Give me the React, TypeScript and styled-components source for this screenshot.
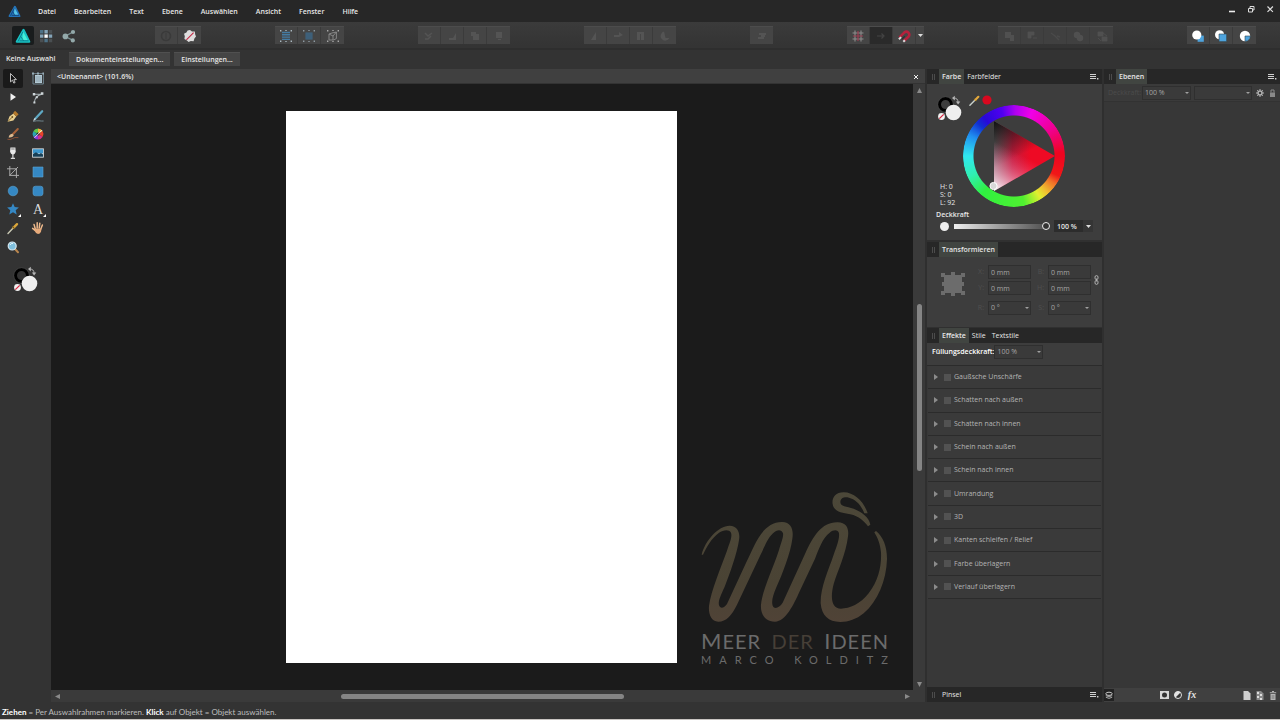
import React from 'react';
import styled, { createGlobalStyle, css } from 'styled-components';

const c = {
  menu: '#272727',
  bar: '#333333',
  panel: '#3d3d3d',
  group: '#454545',
  canvas: '#1b1b1b',
  line: '#2b2b2b',
  text: '#e6e6e6',
  dim: '#a6a6a6',
  blue: '#3588c4',
};

const Global = createGlobalStyle`
  *, *::before, *::after { box-sizing: border-box; }
  body { margin: 0; background: ${c.bar}; }
  body, button, input, select {
    font-family: 'Open Sans', 'Noto Sans', sans-serif;
    font-size: 7px;
    line-height: 10px;
    color: ${c.text};
  }
  button { border: 0; padding: 0; background: none; display: flex; align-items: center; justify-content: center; }
  svg { display: block; }
`;

const Shell = styled.div`
  min-height: 100vh;
  display: grid;
  grid-template-rows: 22px 28px 19px minmax(0, 1fr) 17px;
  border-bottom: 1px solid #c9c5c2;
`;

/* ---------- menu bar ---------- */
const MenuBar = styled.header`
  display: flex;
  align-items: center;
  background: ${c.menu};
  padding: 0 5px 0 8px;
`;
const MenuNav = styled.nav`
  display: flex;
  gap: 18px;
  margin-left: 17px;
  flex: 1;
  padding-top: 2px;
`;
const MenuItem = styled.button`
  font-weight: 600;
`;
const WindowControls = styled.div`
  display: flex;
  gap: 9px;
  align-self: flex-start;
  padding-top: 4px;
`;

/* ---------- toolbar ---------- */
const Toolbar = styled.div`
  display: flex;
  align-items: flex-start;
  gap: 74px;
  padding: 4px 0 0 12px;
  background: linear-gradient(#3b3b3b, #343434 90%);
  border-bottom: 2px solid #2e2e2e;
`;
const Personas = styled.div`
  display: flex;
  gap: 1px;
  width: 69px;
`;
const Persona = styled.button<{ $on?: boolean }>`
  width: 22px;
  height: 19px;
  border-radius: 2px;
  background: ${(p) => (p.$on ? '#191c1d' : 'transparent')};
`;
const Group = styled.div<{ $faint?: boolean }>`
  display: flex;
  height: 18px;
  background: ${(p) => (p.$faint ? '#404040' : c.group)};
  border-top: 1px solid #4c4c4c;
`;
const ToolButton = styled.button<{ $pressed?: boolean; $narrow?: boolean }>`
  width: ${(p) => (p.$narrow ? 8 : 23)}px;
  border-right: 1px solid #3b3b3b;
  background: ${(p) => (p.$pressed ? '#2a2a2a' : 'transparent')};
  &:last-child { border-right: 0; }
`;

/* ---------- context bar ---------- */
const ContextBar = styled.div`
  display: flex;
  align-items: center;
  gap: 4px;
  padding: 0 0 1px 6px;
  background: ${c.bar};
  font-weight: 600;
`;
const Selection = styled.span`
  width: 59px;
`;
const ContextButton = styled.button`
  height: 14px;
  padding: 0 7px;
  background: ${c.group};
  border-top: 1px solid #505050;
  font-weight: 600;
`;

/* ---------- main ---------- */
const Main = styled.main`
  display: grid;
  grid-template-columns: 51px minmax(0, 1fr) 175px 176px;
  column-gap: 2px;
  background: #2f2f2f;
`;
const ToolPanel = styled.aside`
  background: ${c.bar};
  margin-right: -2px;
`;
const ToolGrid = styled.div`
  display: grid;
  grid-template-columns: repeat(2, 25px);
  grid-auto-rows: 1fr;
  height: 187px;
  justify-items: center;
`;
const Tool = styled.button<{ $on?: boolean; $more?: boolean }>`
  width: 20px;
  border-radius: 2px;
  background: ${(p) => (p.$on ? '#1a1a1a' : 'transparent')};
  ${(p) =>
    p.$more &&
    css`
      position: relative;
      &::after {
        content: '';
        position: absolute;
        right: 2px;
        bottom: 2px;
        border-left: 3px solid transparent;
        border-bottom: 3px solid #fff;
      }
    `}
`;
const ToolSwatch = styled.div`
  padding: 10px 0 0 12px;
`;

const Document = styled.section`
  display: grid;
  grid-template-columns: minmax(0, 1fr) 12px;
  grid-template-rows: 15px minmax(0, 1fr) 12px;
  margin-left: -2px;
  background: #3a3a3a;
`;
const DocTab = styled.div`
  grid-column: 1 / 3;
  display: flex;
  align-items: center;
  justify-content: space-between;
  padding: 1px 6px 0;
  background: #404040;
  border-bottom: 1px solid #333;
  font-weight: 600;
`;
const Canvas = styled.div`
  position: relative;
  display: flex;
  align-items: center;
  justify-content: center;
  padding-right: 2px;
  background: ${c.canvas};
`;
const Artboard = styled.div`
  height: calc(100% - 54px);
  aspect-ratio: 391 / 552;
  background: #fff;
`;
const Watermark = styled.div`
  position: absolute;
  right: 25px;
  bottom: 24px;
  width: 187px;
`;
const Brand = styled.div`
  display: flex;
  justify-content: space-between;
  margin: 9px -1px 0 0;
  font: 20px/20px Lato, sans-serif;
  letter-spacing: 1px;
  color: #6b6b6b;
`;
const Initial = styled.span`
  font-size: 22px;
`;
const Muted = styled.span`
  color: #463f37;
`;
const Author = styled.div`
  display: flex;
  justify-content: space-between;
  margin: 3px -8px 0 0;
  font: 11px/12px Lato, sans-serif;
  letter-spacing: 8px;
  color: #6b6b6b;
`;
const VScroll = styled.div`
  display: flex;
  flex-direction: column;
  align-items: center;
  justify-content: space-between;
  padding: 4px 0 3px;
`;
const HScroll = styled.div`
  display: flex;
  align-items: center;
  justify-content: space-between;
  padding: 0 3px 0 4px;
`;
const VThumb = styled.div`
  width: 5px;
  height: 28%;
  border-radius: 3px;
  background: #858585;
`;
const HThumb = styled.div`
  height: 5px;
  width: 33%;
  border-radius: 3px;
  background: #858585;
`;

/* ---------- panels ---------- */
const Column = styled.aside`
  display: flex;
  flex-direction: column;
  background: #383838;
`;
const TabBar = styled.div`
  display: flex;
  align-items: stretch;
  height: 15px;
  flex: none;
  padding: 0 3px 0 5px;
  background: ${c.menu};
`;
const Grip = styled.i`
  width: 3px;
  height: 6px;
  margin: 5px 4px 0 0;
  border: solid #4c4c4c;
  border-width: 0 1px;
`;
const Tab = styled.button<{ $on?: boolean }>`
  padding: 0 3px;
  font-weight: ${(p) => (p.$on ? 600 : 400)};
  background: ${(p) => (p.$on ? '#414541' : 'transparent')};
`;
const PanelMenu = styled.button`
  margin-left: auto;
`;
const ColorBody = styled.div`
  height: 158px;
  padding: 11px 9px 0;
  background: ${c.panel};
  border-bottom: 2px solid #303030;
`;
const ColorTop = styled.div`
  display: grid;
  grid-template-columns: 27px 102px;
`;
const ColorLeft = styled.div`
  display: flex;
  flex-direction: column;
  justify-content: space-between;
`;
const Hsl = styled.div`
  padding-left: 4px;
  line-height: 8px;
  white-space: nowrap;
`;
const PickerRow = styled.div`
  display: flex;
  gap: 2px;
  height: 10px;
  padding-left: 6px;
`;
const Wheel = styled.div`
  display: grid;
  width: 102px;
  height: 102px;
  & > * { grid-area: 1 / 1; }
`;
const HueRing = styled.div`
  border-radius: 50%;
  background: conic-gradient(
    from 90deg,
    #ee0520 0deg, #f01818 24deg, #f07028 34deg, #f0c030 48deg, #e0f030 58deg, #50f030 78deg,
    #30f040 130deg, #30f0b0 155deg, #30e8f0 180deg, #2090f0 205deg, #1030d0 222deg, #2808d8 232deg,
    #5000f0 255deg, #b000f0 272deg, #f000e8 292deg, #f00090 325deg, #ee0520 356deg
  );
  mask: radial-gradient(circle, transparent 40px, #000 41px);
`;
const OpacityLabel = styled.label`
  display: block;
  line-height: 8px;
  margin-top: 4px;
  font-weight: 600;
`;
const OpacityRow = styled.div`
  display: flex;
  align-items: center;
  height: 14px;
`;
const Dot = styled.span`
  width: 9px;
  height: 9px;
  margin: 0 7px 0 4px;
  border-radius: 50%;
  background: #eee;
`;
const Slider = styled.input`
  appearance: none;
  flex: 1;
  min-width: 0;
  height: 8px;
  margin: 0 4px 0 -2px;
  background: linear-gradient(90deg, #eee, #999 50%, #4a4a4a) center / 100% 5px no-repeat;
  &::-webkit-slider-thumb {
    appearance: none;
    width: 8px;
    height: 8px;
    border: 1px solid #eee;
    border-radius: 50%;
    background: #333;
  }
`;
const Percent = styled.input`
  width: 29px;
  height: 12px;
  padding: 0 3px;
  border: 0;
  background: #2c2c2c;
  font-weight: 600;
`;
const PercentMore = styled.button`
  width: 10px;
  height: 12px;
  background: #353535;
`;

const TransformBody = styled.div`
  display: flex;
  height: 71px;
  padding: 8px 2px 0 14px;
  background: ${c.panel};
  border-bottom: 1px solid #303030;
`;
const Anchor = styled.div`
  width: 37px;
  padding-top: 7px;
`;
const Fields = styled.div`
  display: grid;
  grid-template-columns: 10px 43px 17px 43px;
  grid-template-rows: 14px 14px 14px;
  row-gap: 2px;
  align-items: center;
  & > :nth-child(n + 9) { margin-top: 4px; margin-bottom: -4px; }
`;
const FieldLabel = styled.label`
  justify-self: end;
  padding-right: 4px;
  color: #505050;
`;
const Field = styled.input`
  width: 100%;
  height: 14px;
  padding: 0 2px;
  border: 1px solid #2f2f2f;
  background: #3a3a3a;
  color: ${c.dim};
`;
const Link = styled.button`
  align-self: flex-start;
  padding: 10px 0 0 3px;
`;
const SelectBox = styled.span<{ $w?: number }>`
  position: relative;
  display: block;
  width: ${(p) => (p.$w ? `${p.$w}px` : '100%')};
  &::after {
    content: '';
    position: absolute;
    right: 2px;
    top: 6px;
    border: 2px solid transparent;
    border-top-color: #a0a0a0;
    pointer-events: none;
  }
`;
const Select = styled.select`
  appearance: none;
  display: block;
  width: 100%;
  height: 14px;
  padding: 0 2px;
  border: 1px solid #2f2f2f;
  border-radius: 0;
  background: #3a3a3a;
  color: ${c.dim};
`;
const FillRow = styled.div`
  display: flex;
  align-items: center;
  height: 23px;
  padding: 0 5px 4px;
  background: ${c.panel};
  border-bottom: 1px solid ${c.line};
`;
const Strong = styled.label`
  font-weight: 600;
  color: #fff;
`;
const EffectList = styled.ul`
  display: grid;
  grid-auto-rows: 1fr;
  height: 233px;
  margin: 0;
  padding: 0 1px;
  list-style: none;
`;
const Effect = styled.li`
  display: flex;
  align-items: center;
  gap: 6px;
  padding-left: 6px;
  background: #3a3a3a;
  border-bottom: 1px solid ${c.line};
`;
const EffectLabel = styled.label`
  display: flex;
  align-items: center;
  gap: 3px;
  color: #b4b4b4;
`;
const Check = styled.input`
  appearance: none;
  width: 7px;
  height: 7px;
  margin: 0;
  background: #525252;
`;
const Spacer = styled.div`
  flex: 1;
`;
const LayerControls = styled.div`
  display: flex;
  align-items: center;
  gap: 3px;
  height: 18px;
  padding: 0 4px;
  background: #3a3a3a;
  border-bottom: 1px solid #323232;
`;
const LayerLabel = styled.label`
  width: 31px;
  color: #4c4c4c;
`;
const LayerIcons = styled.div`
  display: flex;
  gap: 5px;
  margin-left: 1px;
`;
const LayerList = styled.div`
  flex: 1;
  background: #373737;
`;
const LayerFooter = styled.div`
  display: flex;
  align-items: center;
  height: 14px;
  padding-right: 2px;
  background: #404040;
`;
const FooterGroup = styled.div<{ $push?: boolean }>`
  display: flex;
  gap: ${(p) => (p.$push ? 3 : 4)}px;
  margin-left: ${(p) => (p.$push ? 'auto' : '45px')};
`;
const FooterButton = styled.button<{ $on?: boolean }>`
  width: 10px;
  height: 12px;
  background: ${(p) => (p.$on ? '#222' : 'transparent')};
`;
const StatusBar = styled.footer`
  padding: 5px 2px 0;
  background: ${c.bar};
  font: 8px/10px Lato, sans-serif;
  color: #bdbdbd;
  & b { color: #fff; }
`;

/* ---------- drawings ---------- */
const Svg = ({ w = 14, h = w, vb, children }: { w?: number; h?: number; vb?: string; children: React.ReactNode }) => (
  <svg width={w} height={h} viewBox={vb ?? `0 0 ${w} ${h}`} fill="none" aria-hidden="true">
    {children}
  </svg>
);

const Caret = () => (
  <Svg w={5} h={3}><path d="M0 0h5L2.5 3z" fill="#ddd" /></Svg>
);

const Arrow = ({ dir }: { dir: 'up' | 'down' | 'left' | 'right' }) => {
  const d = { up: 'M0 5L2.5 0L5 5z', down: 'M0 0h5L2.5 5z', left: 'M5 0v5L0 2.5z', right: 'M0 0v5L5 2.5z' }[dir];
  return <Svg w={5}><path d={d} fill="#8a8a8a" /></Svg>;
};

const MenuGlyph = () => (
  <Svg w={9} h={6}>
    <path d="M0 .5h6M0 2.5h6M0 4.5h6" stroke="#d0d0d0" strokeWidth="1.2" />
    <path d="M7 4h1.4v1.4H7z" fill="#d0d0d0" />
  </Svg>
);

const AffinityMark = ({ size, bright }: { size: number; bright?: boolean }) => (
  <Svg w={size} vb="0 0 16 16">
    <path d="M7.6 1.2L.8 13.2q-.5 1.4.9 1.6h12.6q1.6-.2.9-1.6L9.6 1.6q-1-1.3-2-.4z" fill={bright ? '#19c3c4' : '#2473b8'} />
    <path d="M8 3.4L12.6 12H7.2z" fill={bright ? '#45f0d8' : '#57c4e8'} />
    <path d="M7.800 4L3 13.400M6.200 8.800L8.600 13M4.6 12.8h9" stroke={bright ? '#0b7484' : '#0c3564'} strokeWidth=".8" />
  </Svg>
);

const ColorPair = () => (
  <Svg w={28}>
    <circle cx="9.5" cy="9.5" r="6" stroke="#000" strokeWidth="3" />
    <circle cx="9.5" cy="9.5" r="7.8" stroke="#4a4a4a" strokeWidth=".5" />
    <circle cx="17.5" cy="17.5" r="7.8" fill="#efefef" />
    <circle cx="5.5" cy="21.5" r="3.4" fill="#f2f2f2" />
    <path d="M3.3 23.7l4.4-4.4" stroke="#d8213b" strokeWidth="1.2" />
    <path d="M17.5 3.2q4.4-.6 4.6 4.3" stroke="#b5b5b5" strokeWidth="1" />
    <path d="M18.8.8v4.6L16 3.1zM19.9 6.6h4.4L22.1 9.4z" fill="#b5b5b5" />
  </Svg>
);

const Dropper = ({ size = 12 }: { size?: number }) => (
  <Svg w={size} vb="0 0 12 12">
    <path d="M1 11.2L6.6 5.4" stroke="#c9d2cc" strokeWidth="1.5" strokeLinecap="round" />
    <path d="M5.4 3.9l2.8 2.8" stroke="#6b5727" strokeWidth="1.3" />
    <path d="M7 5.2L10.2 2" stroke="#e3a83c" strokeWidth="2.4" strokeLinecap="round" />
  </Svg>
);

const handles = 'M1 1h1.4v1.4H1zM11.6 1H13v1.4h-1.4zM1 11.6h1.4V13H1zM11.6 11.6H13V13h-1.4zM6.3 1h1.4v1H6.3zM6.3 12h1.4v1H6.3z';

const toolIcons: { label: string; on?: boolean; more?: boolean; art: React.ReactNode }[] = [
  { label: 'Verschieben', on: true, art: <path d="M4.500 2.500v8.400l2-1.800 1.300 3 1.300-.6-1.300-2.900h2.600z" stroke="#d0d0d0" strokeWidth=".9" fill="#111" /> },
  {
    label: 'Zeichenfläche',
    art: <><path d="M4 4h7v8H4z" fill="#b4cbd6" /><path d="M4.500 6h6M4.500 8h6M4.500 10h6" stroke="#6f838e" strokeWidth=".6" /><path d="M2 2.600h10.400V13H2z" stroke="#6f848f" strokeWidth="1" /><path d="M1 1.600h2v2H1zM6 1.600h2v2H6zM11.400 1.600h1.600v2h-1.600z" fill="#98adb8" /></>,
  },
  { label: 'Knoten', art: <path d="M4.500 3.2v7.6L10 7z" fill="#f0f0f0" /> },
  {
    label: 'Ecken',
    art: <><path d="M3.400 12.600Q3.600 6 11.400 4M3 4.200h8" stroke="#aab4b8" strokeWidth="1.100" /><path d="M1.800 3h2.400v2.400H1.800zM9.800 2.200h2.600v2.600H9.800zM4.800 6.200h2v2h-2zM2.400 11.400h2v2h-2z" fill="#cdd5d8" /></>,
  },
  {
    label: 'Zeichenstift',
    art: <><path d="M1.600 12.800L3.400 7.400l4-3 2.800 3-2.800 4z" fill="#e9cf8e" /><path d="M7 4.200l2-2.400 3.600 3.400-2.200 2.200z" fill="#b57a2c" /><path d="M2 12.400L6 8.400" stroke="#6e5220" strokeWidth=".8" /><circle cx="6.300" cy="8" r=".9" fill="#6e5220" /></>,
  },
  {
    label: 'Bleistift',
    art: <><path d="M4 10L11.200 2.200" stroke="#5fa9c4" strokeWidth="2.200" strokeLinecap="round" /><path d="M2.600 11.600L4.400 9.400" stroke="#d9d9d9" strokeWidth="1.200" /><path d="M2 12.400q3.600-.8 6-.6 3 .4 4.600.2" stroke="#7d99a4" strokeWidth=".8" /></>,
  },
  {
    label: 'Malpinsel',
    art: <><path d="M7 7L11.800 2" stroke="#a9633a" strokeWidth="2" strokeLinecap="round" /><path d="M2.600 10.400q.8-3.600 3.800-3.600l1.400 1.600q-1.600 2.600-5.200 2z" fill="#dcb88e" /><path d="M1.400 12.200q3 1 5-.6t6-1" stroke="#8b5136" strokeWidth="1" /></>,
  },
  {
    label: 'Verlauf',
    art: <><path d="M7 7V1.600A5.400 5.400 0 0 1 11.700 4.300z" fill="#f1b33b" /><path d="M7 7l4.700-2.700a5.400 5.400 0 0 1 0 5.400z" fill="#e8442c" /><path d="M7 7l4.700 2.700A5.400 5.400 0 0 1 7 12.400z" fill="#d8318a" /><path d="M7 7v5.400a5.400 5.400 0 0 1-4.700-2.700z" fill="#8a38dc" /><path d="M7 7L2.300 9.700a5.400 5.400 0 0 1 0-5.400z" fill="#2ca6b4" /><path d="M7 7L2.300 4.300A5.400 5.400 0 0 1 7 1.600z" fill="#5cc94a" /><circle cx="7" cy="7" r="1.600" fill="#2b2b2b" /><path d="M3.400 10.800L11.200 3" stroke="#f4f4f4" strokeWidth=".9" /></>,
  },
  {
    label: 'Transparenz',
    art: <><path d="M4.400 1.600h5l.3 3.800q-.6 3-2.800 3T4.100 5.400z" fill="#e8e8e8" /><path d="M5.200 2.200h3.400v1.600H5.200z" fill="#a4a4a4" /><path d="M6.900 8v4M4.800 12.400h4.200" stroke="#dcdcdc" strokeWidth="1.200" /></>,
  },
  {
    label: 'Bild platzieren',
    art: <><path d="M1.200 2.400h11.600v9.200H1.200z" fill="#dfe9ee" /><path d="M2 3.200h10v4.200H2z" fill="#3c96cc" /><path d="M2 10.800V8L5 6.200l3 2 2-1.200 2 1.400v2.400z" fill="#173f56" /></>,
  },
  { label: 'Beschnitt', art: <path d="M3.800 1v9.400H13M1 3.800h9.400V13M12 2L3.400 10.800" stroke="#a9a9a9" strokeWidth="1" /> },
  { label: 'Rechteck', art: <path d="M2 2h10v10H2z" fill={c.blue} stroke="#5aa4d4" strokeWidth=".6" /> },
  { label: 'Ellipse', art: <circle cx="7" cy="7" r="4.800" fill={c.blue} stroke="#5aa4d4" strokeWidth=".6" /> },
  { label: 'Abgerundetes Rechteck', art: <rect x="2" y="2.200" width="10" height="9.600" rx="2.400" fill={c.blue} stroke="#5aa4d4" strokeWidth=".6" /> },
  { label: 'Stern', more: true, art: <path d="M7 1.200l1.700 3.900 4.200.4-3.200 2.800 1 4.200L7 10.300l-3.700 2.200 1-4.200L1.100 5.500l4.200-.4z" fill={c.blue} /> },
  { label: 'Text', more: true, art: <text x="7" y="12" textAnchor="middle" fontFamily="Liberation Serif, serif" fontSize="14" fill="#dcdcdc">A</text> },
  { label: 'Farbpipette', art: <><path d="M2 12.400l5.400-5.600" stroke="#c9c9b4" strokeWidth="1.400" strokeLinecap="round" /><path d="M7.400 6.800l3.600-3.600" stroke="#dba63a" strokeWidth="2.400" strokeLinecap="round" /><path d="M6 5.200l3 3" stroke="#6b5727" strokeWidth="1.100" /></> },
  {
    label: 'Ansicht',
    art: <><path d="M4.400 8.200L3 3.400M6.200 7V1.800M8.200 7l.6-4.800M9.800 8l1.600-4M4.400 9.600L1.600 7.400" stroke="#edb98c" strokeWidth="1.500" strokeLinecap="round" /><path d="M4 7.400h6.600L10 10.800q-1 2.200-3 2.200-2.200-.2-3.200-3z" fill="#e6aa7a" /></>,
  },
  { label: 'Zoom', art: <><path d="M9 9l3 3.200" stroke="#b9864e" strokeWidth="2" strokeLinecap="round" /><circle cx="6.200" cy="6" r="4" fill="#7fc0dd" stroke="#d5e6ee" strokeWidth="1.200" /><path d="M4 5q1-2 3-1.600" stroke="#e9f7fc" strokeWidth="1" /></> },
];

const dark = '#545454';
const selectionIcons: React.ReactNode[] = [
  <><path d="M3 3.500h8M3 5.800h8M3 8.100h8M3 10.400h8" stroke="#447ba2" strokeWidth="1.400" /><path d={handles} fill="#a9b8c0" /></>,
  <><path d="M3.400 3.400h7.200v7.200H3.400z" fill="#3e607a" /><path d={handles} fill="#8d9aa2" /></>,
  <><path d="M3 5l3-1 4.400-1v6.600l-3 1.400L3 11zM3 5l4 2v4M7 7l3.400-4" stroke="#8c8c8c" strokeWidth=".9" /><path d={handles} fill="#a8a8a8" /></>,
];
const orderIcons: React.ReactNode[] = [
  <path d="M3 4l3 3 4-3M3 10h3l3-3" stroke={dark} strokeWidth="1.500" />,
  <path d="M11 4v7H4v-2h4z" fill={dark} />,
  <path d="M3 3h5v2h3v6H5V7H3z" fill={dark} />,
  <path d="M4 3h6v6H4zM6 10h3v1H6z" fill={dark} />,
];
const rotateIcons: React.ReactNode[] = [
  <path d="M8 3v8H3z" fill={dark} />,
  <path d="M3 6h5V3l4 3-4 2H3z" fill={dark} />,
  <path d="M3 11V3h7v8H7V5H6v6z" fill={dark} />,
  <path d="M6 2.600A4.600 4.600 0 1 0 11.400 9H7.600z" fill={dark} />,
];
const booleanIcons: React.ReactNode[] = [
  <path d="M3 3h6v3h3v6H8V9H3zM8 9l3-3" fill="#505050" />,
  <path d="M3 3h6v3H6v3H3zM8 9h4" fill="#505050" stroke="#505050" strokeWidth=".8" />,
  <path d="M3 4l4 3 4 4M9 7l3 1" stroke="#4a4a4a" strokeWidth="1.400" />,
  <><circle cx="6" cy="6" r="3.200" fill="#505050" /><circle cx="9" cy="9" r="3.200" fill="#505050" /></>,
  <path d="M3 3h5v4H3zM7 8h5v4H7zM8 4l4 3M3 9l3 3" fill="#505050" stroke="#505050" strokeWidth=".8" />,
];
const insertIcons: React.ReactNode[] = [
  <><path d="M6.600 6.600h6.200v6.200H6.600z" fill="#4ea3dc" /><circle cx="5.800" cy="6" r="4.600" fill="#fff" /></>,
  <><circle cx="5.600" cy="5.800" r="4.600" fill="#fff" /><path d="M5 5h7.600v7.600H5z" fill="#4ea3dc" stroke="#34444e" strokeWidth=".6" /></>,
  <><circle cx="7" cy="7" r="5.200" fill="#fff" /><path d="M7 7h5.400q-.2 5-5.400 5.400z" fill="#4ea3dc" stroke="#34444e" strokeWidth=".6" /></>,
];

const IconGroup = ({ name, icons, faint }: { name: string; icons: React.ReactNode[]; faint?: boolean }) => (
  <Group role="group" aria-label={name} $faint={faint}>
    {icons.map((art, i) => (
      <ToolButton key={i} aria-label={`${name} ${i + 1}`}><Svg>{art}</Svg></ToolButton>
    ))}
  </Group>
);

const effects = [
  'Gaußsche Unschärfe', 'Schatten nach außen', 'Schatten nach innen', 'Schein nach außen', 'Schein nach innen',
  'Umrandung', '3D', 'Kanten schleifen / Relief', 'Farbe überlagern', 'Verlauf überlagern',
];

const Header = ({ tabs, active = 0, menu = true }: { tabs: string[]; active?: number; menu?: boolean }) => (
  <TabBar>
    <Grip />
    {tabs.map((t, i) => <Tab key={t} $on={i === active}>{t}</Tab>)}
    {menu && <PanelMenu aria-label="Bedienfeldmenü"><MenuGlyph /></PanelMenu>}
  </TabBar>
);

const ColorPanel = () => (
  <ColorBody>
    <ColorTop>
      <ColorLeft>
        <ColorPair />
        <Hsl>H: 0<br />S: 0<br />L: 92</Hsl>
      </ColorLeft>
      <div>
        <PickerRow>
          <Dropper size={11} />
          <Svg w={10}><circle cx="5" cy="5" r="4.600" fill="#d9081f" /></Svg>
        </PickerRow>
        <Wheel>
          <HueRing />
          <Svg w={102}>
            <defs>
              <linearGradient id="tone" x1="31" y1="50" x2="92" y2="51" gradientUnits="userSpaceOnUse">
                <stop offset="0" stopColor="#777" /><stop offset=".3" stopColor="#c01c3c" /><stop offset=".6" stopColor="#ee0a24" />
              </linearGradient>
              <linearGradient id="shade" x1="31" y1="16" x2="50" y2="54" gradientUnits="userSpaceOnUse">
                <stop offset="0" stopColor="#101010" /><stop offset="1" stopColor="#101010" stopOpacity="0" />
              </linearGradient>
              <linearGradient id="tint" x1="31" y1="86" x2="51" y2="46" gradientUnits="userSpaceOnUse">
                <stop offset="0" stopColor="#fff" /><stop offset="1" stopColor="#ff5090" stopOpacity="0" />
              </linearGradient>
            </defs>
            {['tone', 'shade', 'tint'].map((id) => <path key={id} d="M31 16L92 51L31 86z" fill={`url(#${id})`} />)}
            <circle cx="97" cy="51" r="3.400" stroke="#fff" strokeWidth="1.400" />
            <circle cx="30.500" cy="81" r="3.600" fill="#d8d8d8" stroke="#fff" strokeWidth="1" />
          </Svg>
        </Wheel>
      </div>
    </ColorTop>
    <OpacityLabel htmlFor="opacity">Deckkraft</OpacityLabel>
    <OpacityRow>
      <Dot />
      <Slider id="opacity" type="range" defaultValue={100} />
      <Percent aria-label="Deckkraft in Prozent" defaultValue="100 %" />
      <PercentMore aria-label="Deckkraft wählen"><Caret /></PercentMore>
    </OpacityRow>
  </ColorBody>
);

const TransformPanel = () => (
  <TransformBody>
    <Anchor>
      <Svg w={24}>
        <path d="M3 3h18v18H3z" fill="#6c6c6c" />
        <path d="M0 1h4v4H0zM10 0h4v4h-4zM20 1h4v4h-4zM1 10h4v4H1zM19 10h4v4h-4zM0 19h4v4H0zM10 20h4v4h-4zM20 19h4v4h-4z" fill="#6c6c6c" />
      </Svg>
    </Anchor>
    <Fields>
      {['X', 'B', 'Y', 'H'].map((n) => (
        <React.Fragment key={n}>
          <FieldLabel htmlFor={`t${n}`}>{n}:</FieldLabel>
          <Field id={`t${n}`} defaultValue="0 mm" />
        </React.Fragment>
      ))}
      {['R', 'S'].map((n) => (
        <React.Fragment key={n}>
          <FieldLabel htmlFor={`t${n}`}>{n}:</FieldLabel>
          <SelectBox><Select id={`t${n}`}><option>0 °</option></Select></SelectBox>
        </React.Fragment>
      ))}
    </Fields>
    <Link aria-label="Seitenverhältnis sperren">
      <Svg w={5} h={10}>
        <rect x="1" y=".6" width="3" height="4" rx="1.500" stroke="#b0b0b0" />
        <rect x="1" y="5.400" width="3" height="4" rx="1.500" stroke="#b0b0b0" />
        <path d="M2.500 3.500v3" stroke="#b0b0b0" />
      </Svg>
    </Link>
  </TransformBody>
);

const LayersPanel = () => (
  <Column>
    <Header tabs={['Ebenen']} />
    <LayerControls>
      <LayerLabel htmlFor="layerOpacity">Deckkraft:</LayerLabel>
      <SelectBox $w={50}><Select id="layerOpacity"><option>100 %</option></Select></SelectBox>
      <SelectBox $w={59}><Select aria-label="Mischmodus"><option> </option></Select></SelectBox>
      <LayerIcons>
        <Svg w={8}>
          <circle cx="4" cy="4" r="2" stroke="#b4b4b4" strokeWidth="1.500" />
          <path d="M4 0v1.500M4 6.500V8M0 4h1.500M6.500 4H8M1.200 1.200l1 1M5.800 5.800l1 1M6.800 1.200l-1 1M2.200 5.800l-1 1" stroke="#b4b4b4" />
        </Svg>
        <Svg w={7} h={8}>
          <path d="M1 3.500h5V8H1z" fill="#8a8a8a" /><path d="M2 3.500V1h3v2.500" stroke="#8a8a8a" />
        </Svg>
      </LayerIcons>
    </LayerControls>
    <LayerList />
    <LayerFooter>
      <FooterButton $on aria-label="Ebenen bearbeiten">
        <Svg w={8}><ellipse cx="4" cy="2.800" rx="3.200" ry="1.600" stroke="#c8c8c8" /><path d="M.8 4.600q3.200 2.400 6.400 0M.8 6.200q3.200 2.400 6.400 0" stroke="#c8c8c8" strokeWidth=".8" /></Svg>
      </FooterButton>
      <FooterGroup>
        <FooterButton aria-label="Maske"><Svg w={9} h={8}><path d="M0 0h9v8H0z" fill="#d6d6d6" /><circle cx="4.500" cy="4" r="2.500" fill="#333" /></Svg></FooterButton>
        <FooterButton aria-label="Anpassung"><Svg w={8}><circle cx="4" cy="4" r="3.500" fill="#333" stroke="#e2e2e2" /><path d="M6.500 1.500A3.500 3.500 0 0 0 1.500 6.500z" fill="#e2e2e2" /></Svg></FooterButton>
        <FooterButton aria-label="Ebeneneffekte"><Svg w={10}><text x="5" y="8" textAnchor="middle" fontFamily="Liberation Serif, serif" fontStyle="italic" fontWeight="700" fontSize="10" fill="#e6e6e6">fx</text></Svg></FooterButton>
      </FooterGroup>
      <FooterGroup $push>
        <FooterButton aria-label="Ebene hinzufügen"><Svg w={8} h={9}><path d="M.5 0h4.500l2.500 2.500V9h-7z" fill="#d0d0d0" /></Svg></FooterButton>
        <FooterButton aria-label="Pixelebene hinzufügen"><Svg w={8} h={9}><path d="M.5 0h4.500l2.500 2.500V9h-7z" fill="#8a8a8a" /><path d="M1 1h2v2H1zM4 3h2v2H4zM1 5h2v2H1zM4 7h2v2H4z" fill="#ddd" /></Svg></FooterButton>
        <FooterButton aria-label="Ebene löschen"><Svg w={8} h={9}><path d="M1.500 3h5v6h-5zM.8 1.200h6.400v1H.8zM3 0h2v1H3z" fill="#b4b4b4" /><path d="M3.200 4v4M4.800 4v4" stroke="#666" strokeWidth=".6" /></Svg></FooterButton>
      </FooterGroup>
    </LayerFooter>
  </Column>
);

const Logo = () => (
  <Svg w={188} h={130} vb="32 34 564 390">
    <defs>
      <linearGradient id="sand" x1="0" y1="34" x2="0" y2="424" gradientUnits="userSpaceOnUse">
        <stop offset="0" stopColor="#4c4839" /><stop offset=".7" stopColor="#4a4334" /><stop offset="1" stopColor="#504337" />
      </linearGradient>
    </defs>
    <path
      fill="url(#sand)"
      d="M34 222C44 180 84 135 118 135C142 135 150 157 146 178C141 216 118 280 103 318C90 346 83 362 86 374C90 386 102 382 110 370L168 245C192 198 214 124 275 124C304 124 310 150 306 174C301 216 276 280 258 320C247 346 243 362 247 375C252 387 267 382 277 366L345 218C368 168 394 124 442 125C470 126 476 145 473 167C467 220 442 270 430 310C419 352 424 384 452 384C478 384 510 370 535 338C565 300 574 255 572 215C570 190 562 172 552 155L557 151C578 168 590 196 590 235C588 300 562 362 520 398C498 416 474 424 450 424C414 424 394 404 391 368C390 320 414 270 430 222C440 195 448 172 446 158C444 147 430 146 418 156C396 172 386 205 374 234L328 332C310 372 286 423 254 423C224 423 210 400 212 372C217 325 248 265 266 208C275 180 280 165 278 158C274 146 260 146 248 158C232 172 222 200 210 224L140 372C124 404 108 423 84 423C62 423 54 400 56 376C62 330 92 260 110 210C120 182 126 168 122 156C116 144 98 148 86 156C64 172 48 200 38 222Z"
    />
    <path
      fill="url(#sand)"
      d="M532 98C522 65 492 35 460 35C434 35 424 54 427 70C430 92 452 96 480 101C506 107 521 121 533 137L540 132C537 111 516 95 490 84C468 77 450 78 450 64C451 51 463 48 476 51C496 56 512 72 522 98Z"
    />
  </Svg>
);

export default function App() {
  return (
    <>
      <Global />
      <Shell>
        <MenuBar>
          <AffinityMark size={13} />
          <MenuNav>
            {['Datei', 'Bearbeiten', 'Text', 'Ebene', 'Auswählen', 'Ansicht', 'Fenster', 'Hilfe'].map((m) => (
              <MenuItem key={m}>{m}</MenuItem>
            ))}
          </MenuNav>
          <WindowControls>
            <button aria-label="Minimieren"><Svg w={10}><path d="M2 7.500h6" stroke="#eee" strokeWidth="1.600" /></Svg></button>
            <button aria-label="Verkleinern"><Svg w={10}><path d="M2.500 4.500h4v3.500h-4zM4 4V2.500h4V6H7" stroke="#ddd" /></Svg></button>
            <button aria-label="Schließen"><Svg w={10}><path d="M2.500 2.500l5.400 5.400M7.900 2.500L2.500 7.900" stroke="#ddd" strokeWidth="1.200" /></Svg></button>
          </WindowControls>
        </MenuBar>

        <Toolbar>
          <Personas>
            <Persona $on aria-label="Designer Persona"><AffinityMark size={16} bright /></Persona>
            <Persona aria-label="Pixel Persona">
              <Svg><path d="M5.400 5.400h3.400v3.400H5.400z" fill="#fff" /><path d="M5.400 1h3.400v3.400H5.400zM1 5.400h3.400v3.400H1zM9.800 5.400h3.400v3.400H9.800z" fill="#84a4b8" /><path d="M1 1h3.400v3.400H1zM5.400 9.800h3.400v3.400H5.400z" fill="#4d7186" /><path d="M9.800 1h3.400v3.400H9.800zM1 9.800h3.400v3.400H1zM9.800 9.800h3.400v3.400H9.800z" fill="#4a4f52" /></Svg>
            </Persona>
            <Persona aria-label="Export Persona">
              <Svg><path d="M3 7.400L11 3M3 7.400l8 4" stroke="#799092" strokeWidth="1.200" /><circle cx="3.400" cy="7.400" r="2.800" fill="#93a9aa" /><circle cx="11" cy="3" r="2.100" fill="#93a9aa" /><circle cx="10.800" cy="11.400" r="2.100" fill="#93a9aa" /></Svg>
            </Persona>
          </Personas>
          <Group role="group" aria-label="Standards">
            <ToolButton aria-label="Synchronisieren"><Svg><circle cx="7" cy="7" r="4.500" stroke="#3a3a3a" strokeWidth="1.600" /><path d="M7 4v6" stroke="#3a3a3a" /></Svg></ToolButton>
            <ToolButton aria-label="Zurücksetzen"><Svg><path d="M7 1l2 1.400 2.800.2.400 2.800L13 7.600l-1.600 2-.8 2.600-2.800-.2L5.600 13l-2-1.800L1.400 10l.4-2.800L1 4.800l2.400-1.200L4.600 1.400z" fill="#dedede" /><path d="M3.400 10.800L10.600 3.600" stroke="#c42845" strokeWidth="1.100" /></Svg></ToolButton>
          </Group>
          <IconGroup name="Auswahl" icons={selectionIcons} />
          <IconGroup name="Anordnen" icons={orderIcons} />
          <IconGroup name="Drehen" icons={rotateIcons} />
          <IconGroup name="Ausrichten" icons={[<path d="M4 5h7M3 9h6M6 7h4" stroke="#5a5a5a" strokeWidth="1.300" />]} />
          <Group role="group" aria-label="Einrasten">
            <ToolButton aria-label="Raster"><Svg><path d="M4 1.500v11M10 1.500v11M1.500 4h11M1.500 10h11" stroke="#8d8d8d" strokeWidth="1.100" /><path d="M7 2v10M2 7h10" stroke="#9a3c50" strokeWidth="1.200" /></Svg></ToolButton>
            <ToolButton $pressed aria-label="Pixelausrichtung"><Svg><path d="M3 7h6M7.500 4.500L10 7 7.500 9.500" stroke="#444" strokeWidth="1.200" /></Svg></ToolButton>
            <ToolButton aria-label="Magnetisch"><Svg><path d="M2.400 8.400L7.200 3.600q2.400-2 4.200 0t0 4.200L6.800 12" stroke="#b5213c" strokeWidth="2.600" /><path d="M7.800 7.400L4.600 10.400" stroke="#2d2d2d" strokeWidth="1.200" /><path d="M1.200 9.600l2.200-2.200 1.400 1.400L2.600 11zM5.600 12l1.600-1.600 1.500 1.500L7 13.600z" fill="#d8d8d8" /></Svg></ToolButton>
            <ToolButton $narrow aria-label="Magnetische Optionen"><Caret /></ToolButton>
          </Group>
          <IconGroup name="Geometrie" icons={booleanIcons} faint />
          <IconGroup name="Einfügen" icons={insertIcons} />
        </Toolbar>

        <ContextBar>
          <Selection>Keine Auswahl</Selection>
          <ContextButton>Dokumenteinstellungen...</ContextButton>
          <ContextButton>Einstellungen...</ContextButton>
        </ContextBar>

        <Main>
          <ToolPanel>
            <ToolGrid>
              {toolIcons.map((t) => (
                <Tool key={t.label} aria-label={t.label} $on={t.on} $more={t.more}><Svg>{t.art}</Svg></Tool>
              ))}
            </ToolGrid>
            <ToolSwatch><ColorPair /></ToolSwatch>
          </ToolPanel>

          <Document>
            <DocTab>
              <span>&lt;Unbenannt&gt; (101.6%)</span>
              <button aria-label="Dokument schließen"><Svg w={6}><path d="M1 1l4 4M5 1L1 5" stroke="#eee" /></Svg></button>
            </DocTab>
            <Canvas>
              <Artboard />
              <Watermark>
                <Logo />
                <Brand>
                  <span><Initial>M</Initial>EER</span>
                  <Muted>DER</Muted>
                  <span><Initial>I</Initial>DEEN</span>
                </Brand>
                <Author><span>MARCO</span><span>KOLDITZ</span></Author>
              </Watermark>
            </Canvas>
            <VScroll><Arrow dir="up" /><VThumb /><Arrow dir="down" /></VScroll>
            <HScroll><Arrow dir="left" /><HThumb /><Arrow dir="right" /></HScroll>
          </Document>

          <Column>
            <Header tabs={['Farbe', 'Farbfelder']} />
            <ColorPanel />
            <Header tabs={['Transformieren']} menu={false} />
            <TransformPanel />
            <Header tabs={['Effekte', 'Stile', 'Textstile']} menu={false} />
            <FillRow>
              <Strong htmlFor="fill">Füllungsdeckkraft:</Strong>
              <SelectBox $w={49}><Select id="fill"><option>100 %</option></Select></SelectBox>
            </FillRow>
            <EffectList>
              {effects.map((e) => (
                <Effect key={e}>
                  <Svg w={4} h={6}><path d="M0 0v6L4 3z" fill="#8c8c8c" /></Svg>
                  <EffectLabel><Check type="checkbox" />{e}</EffectLabel>
                </Effect>
              ))}
            </EffectList>
            <Spacer />
            <Header tabs={['Pinsel']} active={-1} />
          </Column>

          <LayersPanel />
        </Main>

        <StatusBar>
          <b>Ziehen</b> = Per Auswahlrahmen markieren. <b>Klick</b> auf Objekt = Objekt auswählen.
        </StatusBar>
      </Shell>
    </>
  );
}
